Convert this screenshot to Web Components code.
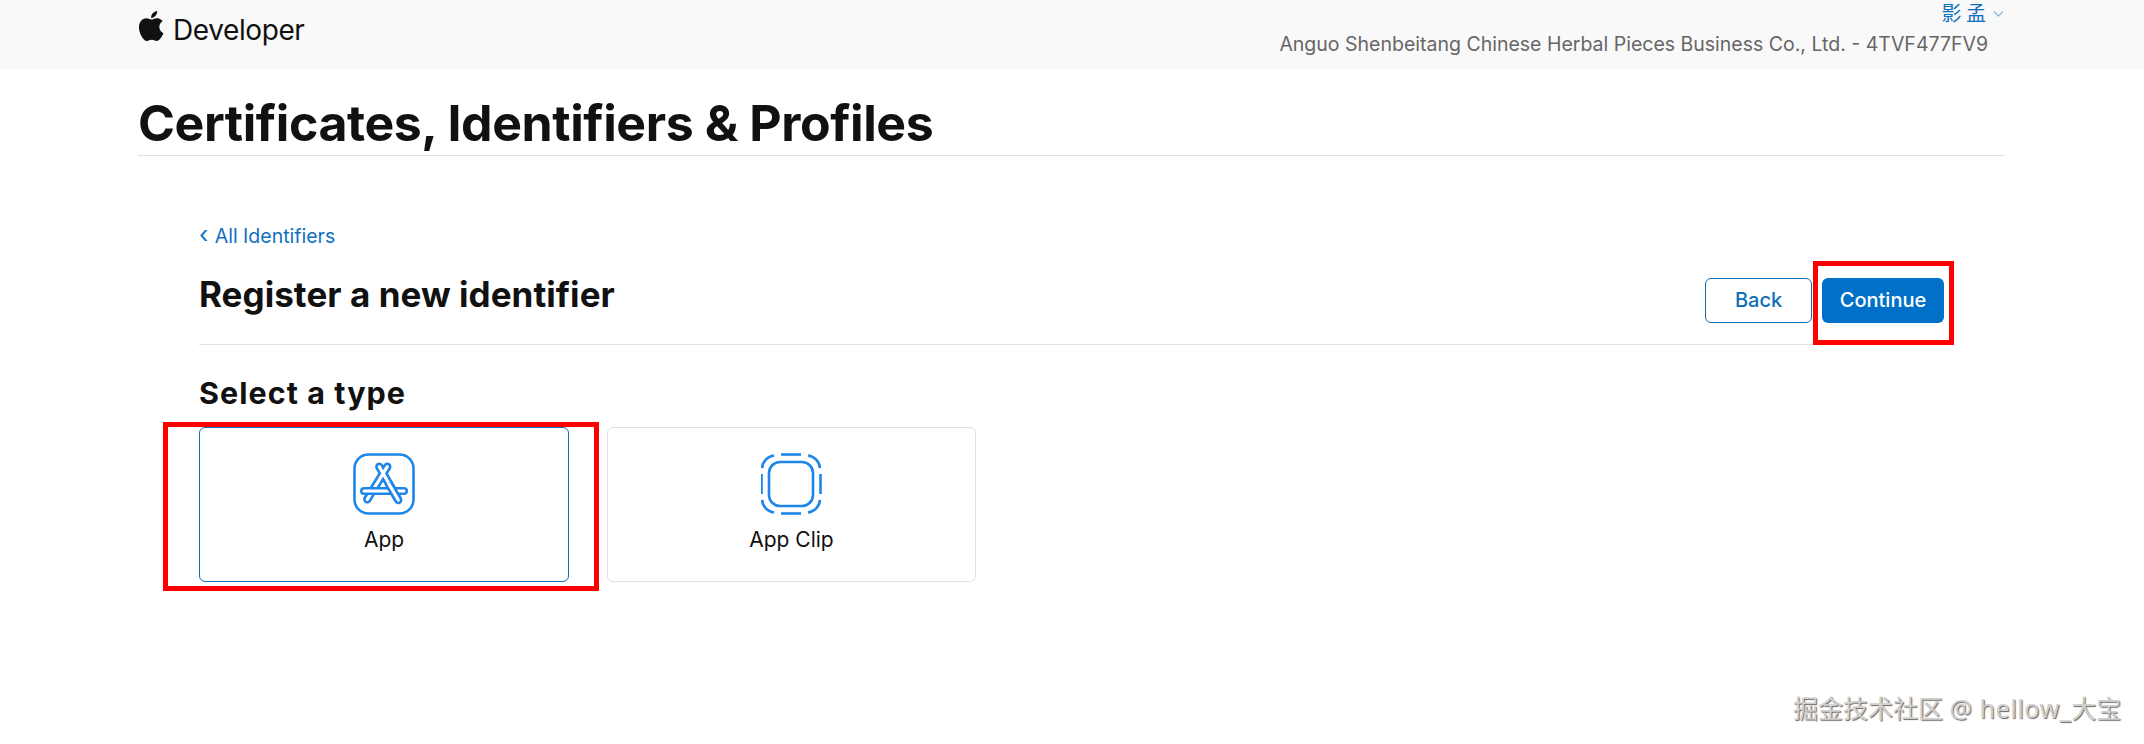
<!DOCTYPE html>
<html lang="en">
<head>
<meta charset="utf-8">
<title>Certificates, Identifiers & Profiles</title>
<style>
html, body { margin: 0; padding: 0; background: #fff; }
body { font-family: Inter, "Liberation Sans", "Noto Sans CJK SC", sans-serif; color: #111; width: 2144px; height: 744px; overflow: hidden; position: relative; }
</style>
</head>
<body>
<dev-header></dev-header>
<page-title>Certificates, Identifiers &amp; Profiles</page-title>
<register-panel></register-panel>
<water-mark></water-mark>

<script>
class DevHeader extends HTMLElement {
    constructor() {
        super();
        this.attachShadow({ mode: "open" });
        this.shadowRoot.innerHTML = `
        <style>
          :host { display: flex; justify-content: space-between; height: 69px; box-sizing: border-box; padding: 0 156px 0 139px; background: #f9f9f9; }
          .brand { display: flex; align-items: flex-start; gap: 9px; padding-top: 11px; }
          .brand svg { width: 25px; height: 30px; fill: #111; }
          .brand span { font-size: 28px; line-height: 36px; letter-spacing: -0.4px; color: #111; margin-top: 1px; }
          .account { display: flex; flex-direction: column; align-items: flex-end; font-size: 19.5px; color: #666; }
          .user { display: flex; align-items: center; gap: 7px; height: 26px; margin-right: -16px; color: #0f70bd; font-family: "Noto Sans CJK SC", sans-serif; font-size: 20px; line-height: 24px; }
          .user svg { width: 11px; height: 7px; stroke: #8fbbdd; fill: none; stroke-width: 1.3; }
          .team { line-height: 30px; margin-top: 3px; }
        </style>
        <div class="brand">
          <svg viewBox="2.5 0 19.5 24"><path d="M12.152 6.896c-.948 0-2.415-1.078-3.96-1.04-2.04.027-3.91 1.183-4.961 3.014-2.117 3.675-.546 9.103 1.519 12.09 1.013 1.454 2.208 3.09 3.792 3.039 1.52-.065 2.09-.987 3.935-.987 1.831 0 2.35.987 3.96.948 1.637-.026 2.676-1.48 3.676-2.948 1.156-1.688 1.636-3.325 1.662-3.415-.039-.013-3.182-1.221-3.22-4.857-.026-3.04 2.48-4.494 2.597-4.559-1.429-2.09-3.623-2.324-4.39-2.376-2-.156-3.675 1.09-4.61 1.09zM15.53 3.83c.843-1.012 1.4-2.427 1.245-3.83-1.207.052-2.662.805-3.532 1.818-.78.896-1.454 2.338-1.273 3.714 1.338.104 2.715-.688 3.559-1.701"/></svg>
          <span>Developer</span>
        </div>
        <div class="account">
          <div class="user"><span>影 孟</span><svg viewBox="0 0 11 7"><path d="M1 1.5l4.5 4.5 4.5-4.5"/></svg></div>
          <div class="team">Anguo Shenbeitang Chinese Herbal Pieces Business Co., Ltd. - 4TVF477FV9</div>
        </div>`;
    }
}

class PageTitle extends HTMLElement {
    constructor() {
        super();
        this.attachShadow({ mode: "open" });
        this.shadowRoot.innerHTML = `
        <style>
          :host { display: block; margin: 0 139px 0 138px; height: 86px; border-bottom: 1px solid #e2e2e2; }
          h1 { margin: 0; padding-top: 24px; font-size: 50px; line-height: 60px; font-weight: 700; letter-spacing: -0.42px; color: #111; }
        </style>
        <h1><slot></slot></h1>`;
    }
}

class TypeCard extends HTMLElement {
    constructor() {
        super();
        this.attachShadow({ mode: "open" });
        this.shadowRoot.innerHTML = `
        <style>
          :host { display: flex; flex-direction: column; align-items: center; width: 369px; height: 155px; box-sizing: border-box; padding-top: 25px; border: 1px solid #e0e0e0; border-radius: 6px; font-size: 21px; color: #111; }
          :host([selected]) { width: 370px; border-color: #0f70b7; }
          ::slotted(svg) { width: 62px; height: 62px; }
          .label { margin-top: 11px; line-height: 28px; }
        </style>
        <slot name="icon"></slot>
        <div class="label"><slot></slot></div>`;
    }
}

class RegisterPanel extends HTMLElement {
    constructor() {
        super();
        this.attachShadow({ mode: "open" });
        this.shadowRoot.innerHTML = `
        <style>
          :host { display: block; margin: 0 200px 0 199px; }
          a { display: block; padding-top: 67px; height: 26px; font-size: 19.5px; line-height: 26px; color: #0f70c0; text-decoration: none; }
          a span { font-size: 24px; line-height: 20px; margin-right: 1px; }
          .head { display: flex; justify-content: space-between; align-items: flex-start; height: 71px; padding-top: 24px; border-bottom: 1px solid #e2e2e2; }
          h2 { margin: 0; font-size: 35px; line-height: 42px; font-weight: 700; letter-spacing: 0.05px; color: #111; }
          .buttons { display: flex; gap: 10px; padding-top: 5px; }
          button { height: 45px; box-sizing: border-box; border-radius: 6px; font: 500 20px Inter, sans-serif; padding: 0 0 2px; }
          .back { width: 107px; background: #fff; border: 1px solid #0f70b7; color: #0f70b7; }
          .next { width: 122px; background: #0070c9; border: 0; color: #fff; }
          h3 { margin: 0; padding-top: 28px; font-size: 30.5px; line-height: 40px; font-weight: 700; letter-spacing: 1.05px; color: #111; }
          .types { display: flex; gap: 38px; margin-top: 14px; }
          .mark { position: absolute; box-sizing: border-box; border: 5px solid #f00; pointer-events: none; }
        </style>
        <a href="#"><span>‹</span> All Identifiers</a>
        <div class="head">
          <h2>Register a new identifier</h2>
          <div class="buttons"><button class="back">Back</button><button class="next">Continue</button></div>
        </div>
        <h3>Select a type</h3>
        <div class="types">
          <type-card selected>
            <svg slot="icon" viewBox="0 0 62 62" fill="none" stroke-linecap="round">
              <rect x="1.5" y="1.5" width="59" height="59" rx="14" stroke="#1d86e8" stroke-width="2.6"/>
              <path d="M34.3 13.7 L14.3 46.3 M26.3 13.7 L45.3 47" stroke="#1d86e8" stroke-width="8.4"/>
              <path d="M34.3 13.7 L14.3 46.3 M26.3 13.7 L45.3 47" stroke="#fff" stroke-width="3.2"/>
              <path d="M11 38 H51" stroke="#1d86e8" stroke-width="8"/>
              <path d="M11 38 H51" stroke="#fff" stroke-width="3"/>
              <path d="M35.2 29.7 L45.3 47" stroke="#1d86e8" stroke-width="8.4" stroke-linecap="butt"/>
              <path d="M35.2 29.7 L45.3 47" stroke="#fff" stroke-width="3.2" stroke-linecap="butt"/>
            </svg>
            App
          </type-card>
          <type-card>
            <svg slot="icon" viewBox="1 0 62 62" fill="none" stroke="#1d86e8" stroke-width="2.6">
              <rect x="9" y="9" width="44" height="44" rx="11"/>
              <path d="M21 1.5 h20"/><path d="M21 60.5 h20"/><path d="M1.5 21 v20"/><path d="M60.5 21 v20"/>
              <path d="M2 15 a14 14 0 0 1 12 -12.5"/><path d="M48 2.5 a14 14 0 0 1 12 12.5"/>
              <path d="M2 47 a14 14 0 0 0 12 12.5"/><path d="M48 59.5 a14 14 0 0 0 12 -12.5"/>
            </svg>
            App Clip
          </type-card>
        </div>
        <div class="mark" style="left:163px;top:422px;width:436px;height:169px"></div>
        <div class="mark" style="left:1813px;top:261px;width:141px;height:84px"></div>`;
    }
}

class WaterMark extends HTMLElement {
    constructor() {
        super();
        this.attachShadow({ mode: "open" });
        this.shadowRoot.innerHTML = `
        <style>
          :host { position: absolute; left: 1793px; top: 690px; font-family: "Noto Sans", "Noto Sans CJK SC", sans-serif; font-size: 25px; line-height: 36px; color: #d0d0d0; white-space: nowrap; text-shadow: 1px 1px 1px #666; }
          span { letter-spacing: 0.55px; }
        </style>
        掘金技术社区 <span>@ hellow_</span>大宝`;
    }
}

customElements.define("type-card", TypeCard);
customElements.define("dev-header", DevHeader);
customElements.define("page-title", PageTitle);
customElements.define("register-panel", RegisterPanel);
customElements.define("water-mark", WaterMark);
</script>
</body>
</html>
